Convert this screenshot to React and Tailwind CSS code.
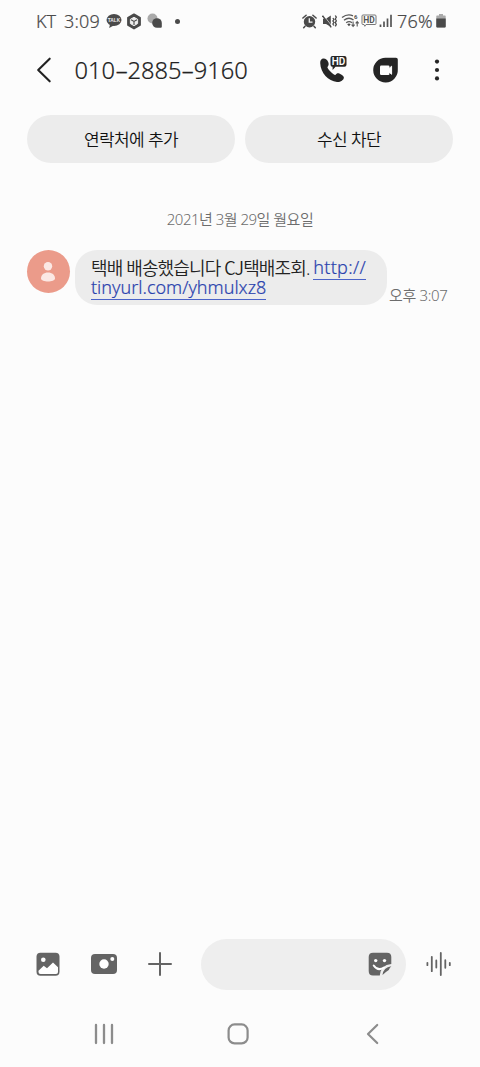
import React from "react";

const ink = "#4a4a4a";

function TalkIcon() {
  return (
    <svg className="block shrink-0" width="16" height="16" viewBox="0 0 16 16">
      <ellipse cx="8" cy="7" rx="7.5" ry="6" fill={ink} />
      <path d="M4 11 L3.2 15 L8.5 12 Z" fill={ink} />
      <text x="8" y="8.8" textAnchor="middle" fontSize="4.8" fontWeight="700" fontFamily="Liberation Sans, sans-serif" fill="#eee">TALK</text>
    </svg>
  );
}

function CubeIcon() {
  return (
    <svg className="block shrink-0" width="16" height="17" viewBox="0 0 16 17">
      <path d="M8 1.3 L14 4.8 V12 L8 15.6 L2 12 V4.8 Z" fill={ink} stroke={ink} strokeWidth="1.8" strokeLinejoin="round" />
      <path d="M8 4.3 L11.6 6.3 V10.6 L8 12.7 L4.4 10.6 V6.3 Z" fill="#eee" stroke="#eee" strokeWidth="1" strokeLinejoin="round" />
      <path d="M5 6.7 L8 8.4 L11 6.7 M8 8.4 V12" fill="none" stroke={ink} strokeWidth="1.1" />
    </svg>
  );
}

function BubblesIcon() {
  return (
    <svg className="block shrink-0" width="16" height="16" viewBox="0 0 16 16">
      <circle cx="5.5" cy="5.5" r="5" fill="#aaa" />
      <path d="M5.2 10 A4.8 4.8 0 1 1 14.8 10 V13.8 Q14.8 14.8 13.8 14.8 H10 A4.8 4.8 0 0 1 5.2 10 Z" fill={ink} />
    </svg>
  );
}

function AlarmIcon() {
  return (
    <svg className="block shrink-0" width="15" height="15" viewBox="0 0 15 15">
      <circle cx="7.5" cy="7.7" r="5.7" fill={ink} />
      <path d="M.9 4 L4.1 1.2 M10.9 1.2 L14.1 4 M3 12.3 L1.7 13.8 M12 12.3 L13.3 13.8" stroke={ink} strokeWidth="1.5" strokeLinecap="round" />
      <path d="M7.3 4.3 V8.1 H10.5" fill="none" stroke="#f5f5f5" strokeWidth="1.3" />
    </svg>
  );
}

function MuteIcon() {
  return (
    <svg className="block shrink-0" width="15" height="15" viewBox="0 0 15 15">
      <path d="M1 4.8 H4 L8.8 1.5 V12.8 L4 10 H1 Z" fill={ink} />
      <path d="M1.6 1.3 L10.4 12.8" stroke="#fcfcfc" strokeWidth=".7" />
      <path d="M.5 1.7 L9.2 13.4" stroke={ink} strokeWidth="1.5" />
      <path d="M10.9 4 L11.9 5.5 L10.9 7 L11.9 8.5 L10.9 10 L11.9 11.5 M13.3 1.5 L14.3 3.2 L13.3 5 L14.3 6.8 L13.3 8.6 L14.3 10.4 L13.3 12.4" fill="none" stroke={ink} strokeWidth="1.3" />
    </svg>
  );
}

function WifiIcon() {
  return (
    <svg className="block shrink-0" width="19" height="16" viewBox="0 0 19 16">
      <g fill="none" stroke="#5a5a5a" strokeWidth="1.4">
        <path d="M1 4.5 Q6.5 .3 12 2.8" />
        <path d="M3 7.3 Q7.8 3.5 12.5 7" />
        <path d="M5.2 9.8 Q8.2 7.4 11 9.8" />
        <path d="M12.1 8.5 V13 M10.6 11.7 L12.1 13.4 L13.6 11.7 M16.2 13.5 V9 M14.7 10.4 L16.2 8.7 L17.7 10.4" strokeWidth="1.1" />
      </g>
      <path d="M6.2 11.2 Q8 9.8 9.7 11.2 L8 13.2 Z" fill={ink} />
      <text x="13" y="6.2" fontSize="6" fontWeight="700" fontFamily="Roboto, sans-serif" fill={ink}>6</text>
    </svg>
  );
}

function HdStatusIcon() {
  return (
    <svg className="block shrink-0" width="16" height="14" viewBox="0 0 16 14">
      <path d="M2 1 H14 Q15 1 15 2 V9.5 Q15 10.5 14 10.5 H5 L3.8 12.3 L3 10.5 H2 Q1 10.5 1 9.5 V2 Q1 1 2 1 Z" fill="none" stroke="#777" strokeWidth="1" />
      <text x="8" y="9" textAnchor="middle" fontSize="8.8" fontWeight="700" fontFamily="Roboto, sans-serif" fill="#555" textLength="11.5" lengthAdjust="spacingAndGlyphs">HD</text>
    </svg>
  );
}

function SignalIcon() {
  return (
    <svg className="block shrink-0" width="14" height="14" viewBox="0 0 14 14">
      <path d="M1.5 10.4 V13 M5 7.6 V13 M8.5 4.4 V13 M12 .8 V13" stroke="#555" strokeWidth="1.7" />
    </svg>
  );
}

function BatteryIcon() {
  return (
    <svg className="block shrink-0" width="10" height="14" viewBox="0 0 10 14">
      <path d="M3 0 H7 V1.5 H9 Q9.7 1.5 9.7 2.3 V12.5 Q9.7 13.5 8.7 13.5 H1.3 Q.3 13.5 .3 12.5 V2.3 Q.3 1.5 1 1.5 H3 Z" fill="#aaa" />
      <path d="M.3 4.4 H9.7 V12.5 Q9.7 13.5 8.7 13.5 H1.3 Q.3 13.5 .3 12.5 Z" fill={ink} />
    </svg>
  );
}

function StatusBar() {
  return (
    <div className="flex h-[42px] items-center pl-[36px] text-[18px] leading-none text-[#4a4a4a] [-webkit-text-stroke:0.2px]">
      <span className="w-[28px] pb-px">KT</span>
      <span className="w-[42px] pb-px tracking-[0.2px]">3:09</span>
      <TalkIcon />
      <span className="ml-[4px]"><CubeIcon /></span>
      <span className="ml-[5px]"><BubblesIcon /></span>
      <span className="ml-[12px] size-[5px] rounded-full bg-[#4a4a4a]" />
      <div className="ml-[121.5px] flex items-center">
        <AlarmIcon />
        <span className="ml-[5px]"><MuteIcon /></span>
        <span className="ml-[4px]"><WifiIcon /></span>
        <span className="ml-[1px]"><HdStatusIcon /></span>
        <span className="ml-[2px]"><SignalIcon /></span>
        <span className="ml-[4.5px] w-[39px] whitespace-nowrap pb-px tracking-[0.2px]">76%</span>
        <BatteryIcon />
      </div>
    </div>
  );
}

function Hyphen() {
  return <span className="inline-block w-[12.3px] origin-left scale-x-[1.75]">-</span>;
}

function Header() {
  return (
    <header className="flex h-[56px] items-center pl-[36px]">
      <svg className="block" width="16" height="26" viewBox="0 0 16 26">
        <path d="M13.7 1.7 L2.2 13 L13.7 24.3" fill="none" stroke="#222" strokeWidth="2.1" strokeLinecap="round" strokeLinejoin="round" />
      </svg>
      <h1 className="ml-[22.5px] w-[243.5px] whitespace-nowrap pt-[2px] text-[23.7px] leading-none text-[#222] [-webkit-text-stroke:0.2px]">
        010<Hyphen />2885<Hyphen />9160
      </h1>
      <svg className="block" width="30" height="30" viewBox="0 0 30 30">
        <path d="M5.6 3.6 C3.7 3.5 2.1 5.3 2.2 8 C2.6 18 10.3 26 19 27 C22.4 27.3 25.6 25.3 25.9 22.8 C26 21.3 24.5 20.3 21.8 18.8 C19.6 17.7 18.6 18.5 17.4 20 C16.2 20.7 9.5 14 9.4 12.2 C10.5 10.6 11.1 9.4 10.3 7.3 C9.2 4.9 7.8 3.6 5.6 3.6 Z" fill="#252525" />
        <path d="M14.5 1 H26.5 Q28.5 1 28.5 3 V9.8 Q28.5 11.8 26.5 11.8 H17.5 L14.6 15 V11.8 H14.3 Q12.5 11.8 12.5 9.8 V3 Q12.5 1 14.5 1 Z" fill="#252525" />
        <text x="20.5" y="9.9" textAnchor="middle" fontSize="10" fontWeight="600" fontFamily="Roboto, sans-serif" fill="#fff">HD</text>
      </svg>
      <svg className="ml-[24px] block" width="28" height="28" viewBox="0 0 28 28">
        <path d="M13.5 1.8 H24 Q25.8 1.8 25.8 3.6 V13.5 A12.3 12.3 0 1 1 13.5 1.8 Z" fill="#252525" />
        <rect x="8" y="9.5" width="9.5" height="9.5" rx="1.2" fill="#fff" />
        <path d="M16.5 13 L19.6 10.2 V18.3 L16.5 15.5 Z" fill="#fff" stroke="#fff" strokeLinejoin="round" />
      </svg>
      <svg className="ml-[34px] block" width="6" height="24" viewBox="0 0 6 24">
        <circle cx="3" cy="3.6" r="2.1" fill="#252525" />
        <circle cx="3" cy="12" r="2.1" fill="#252525" />
        <circle cx="3" cy="20.4" r="2.1" fill="#252525" />
      </svg>
    </header>
  );
}

function Message() {
  return (
    <div className="mt-[20px] flex h-[55px] pl-[27px]">
      <div className="flex size-[43px] items-center justify-center rounded-full bg-[#eb9b8a]">
        <svg className="mr-[2px] block" width="16" height="22" viewBox="0 0 16 22">
          <circle cx="8" cy="5.2" r="4.2" fill="#fbe8e4" />
          <path d="M1 17.5 C1 13.8 4 11.5 8 11.5 S15 13.8 15 17.5 C15 21.5 1 21.5 1 17.5 Z" fill="#fbe8e4" />
        </svg>
      </div>
      <div className="ml-[5px] h-[55px] w-[312px] whitespace-nowrap rounded-[22px] bg-[#ececec] pl-[16px] pt-[8px] text-[18px] leading-[20px] text-[#222]">
        <div className="-mt-px h-[20px] tracking-[-0.87px]">
          택배 배송했습니다 <span className="font-['Noto_Sans_CJK_KR',sans-serif]">CJ</span>택배조회. <a className="inline-block h-[23px] border-b border-[#4a62c8] align-top tracking-[0.3px] text-[#2b43ae] [-webkit-text-stroke:0.2px]">http://</a>
        </div>
        <div className="h-[20px]"><a className="inline-block h-[23px] border-b border-[#4a62c8] align-top text-[#2b43ae] [-webkit-text-stroke:0.2px]">tinyurl.com/yhmulxz8</a></div>
      </div>
      <time className="ml-[2px] self-end whitespace-nowrap pb-[2px] text-[15px] leading-[16px] tracking-[-0.35px] text-[#6c6c6c]">오후 3:07</time>
    </div>
  );
}

function Composer() {
  return (
    <div className="flex h-[51px] items-center pl-[35px]">
      <svg className="mb-px block" width="26" height="26" viewBox="0 0 26 26">
        <rect x="1.5" y="1.7" width="23" height="23" rx="4" fill="#646464" />
        <circle cx="8.3" cy="8.8" r="2.3" fill="#fff" />
        <path d="M3.5 19.8 L8.7 14.8 L12 17.2 L18 11.5 L23 16.2 V21 Q23 23 21 23 H5.5 Q3.5 23 3.5 21 Z" fill="#fff" />
      </svg>
      <svg className="mb-[2px] ml-[29px] block" width="28" height="24" viewBox="0 0 28 24">
        <rect x="1" y="2" width="26" height="20" rx="4" fill="#646464" />
        <circle cx="14" cy="12" r="4.7" fill="#fff" />
        <circle cx="22.3" cy="7" r="2" fill="#fff" />
      </svg>
      <svg className="mb-px ml-[30px] block" width="24" height="24" viewBox="0 0 24 24">
        <path d="M12 1 V23 M1 12 H23" stroke="#646464" strokeWidth="2" strokeLinecap="round" />
      </svg>
      <div className="ml-[29px] flex h-[51px] w-[205px] items-center justify-end rounded-full bg-[#eee] pr-[13px]">
        <svg className="mb-px block" width="26" height="26" viewBox="0 0 26 26">
          <path d="M6 1.7 H20 Q24.3 1.7 24.3 6 V13 Q13.8 13.7 12.8 24.5 H6 Q1.7 24.5 1.7 20 V6 Q1.7 1.7 6 1.7 Z" fill="#646464" />
          <path d="M15.5 24 Q16.3 16.3 24.3 15.2 Q22 17.5 21.8 19 Q18.5 21 15.5 24 Z" fill="#646464" />
          <circle cx="8.7" cy="9.6" r="1.7" fill="#fff" />
          <circle cx="17.5" cy="9.6" r="1.7" fill="#fff" />
          <path d="M6.7 14.5 Q10.8 20.6 17 16.5" fill="none" stroke="#fff" strokeWidth="2" strokeLinecap="round" />
        </svg>
      </div>
      <svg className="mb-px ml-[19px] block" width="28" height="26" viewBox="0 0 28 26">
        <path d="M2.4 11.8 V14.2 M6.8 5.8 V20.2 M11.3 9.4 V16.6 M15.8 2 V24 M20.3 9.2 V16.8 M24.8 11.8 V14.2" stroke="#646464" strokeWidth="1.8" strokeLinecap="round" />
      </svg>
    </div>
  );
}

function NavBar() {
  return (
    <nav className="flex h-[77px] items-center pl-[93px] pt-[10px]">
      <svg className="block" width="22" height="22" viewBox="0 0 22 22">
        <path d="M3 2 V20 M11 2 V20 M19 2 V20" stroke="#8c8c8c" strokeWidth="2.3" strokeLinecap="round" />
      </svg>
      <svg className="ml-[111px] block" width="24" height="24" viewBox="0 0 24 24">
        <rect x="2.6" y="2.4" width="19" height="19" rx="6" fill="none" stroke="#8c8c8c" strokeWidth="2.2" />
      </svg>
      <svg className="ml-[116px] block" width="14" height="22" viewBox="0 0 14 22">
        <path d="M11.2 2 L2 11 L11.2 20" fill="none" stroke="#8c8c8c" strokeWidth="2.2" strokeLinecap="round" strokeLinejoin="round" />
      </svg>
    </nav>
  );
}

function ActionButton({ children }) {
  return (
    <button className="h-[48px] w-[208px] rounded-full bg-[#ececec] pt-px text-[17px] leading-none tracking-[-0.6px] text-[#111]">
      {children}
    </button>
  );
}

export default function App() {
  return (
    <div className="flex h-[1067px] w-[480px] flex-col overflow-hidden bg-[#fcfcfc] font-['Noto_Sans','Noto_Sans_CJK_KR',sans-serif] font-[350]">
      <StatusBar />
      <Header />
      <div className="mt-[17px] flex gap-[10px] pl-[27px]">
        <ActionButton>연락처에 추가</ActionButton>
        <ActionButton>수신 차단</ActionButton>
      </div>
      <main className="flex-1 pt-[46px]">
        <div className="mb-[21px] h-[20px] text-center text-[15px] leading-[20px] tracking-[-0.5px] text-[#6c6c6c]">2021년 3월 29일 월요일</div>
        <Message />
      </main>
      <Composer />
      <NavBar />
    </div>
  );
}
